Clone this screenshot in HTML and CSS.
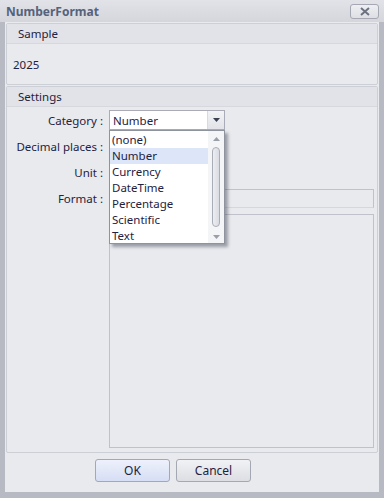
FILE: index.html
```html
<!DOCTYPE html>
<html lang="en">
<head>
    <meta charset="UTF-8">
    <title>NumberFormat</title>
    <link rel="stylesheet" href="styles.css">
</head>
<body>
<div class="window">
    <div class="titlebar">
        <span class="title">NumberFormat</span>
        <span class="close">
            <svg width="12" height="9" viewBox="0 0 12 9"><path d="M2 1 L10 8 M10 1 L2 8" stroke="#6d7280" stroke-width="2"/></svg>
        </span>
    </div>
    <div class="body">
        <div class="group sample">
            <div class="group-head">Sample</div>
            <div class="sample-value">2025</div>
        </div>
        <div class="group settings">
            <div class="group-head">Settings</div>
            <div class="form">
                <div class="field">
                    <label>Category :</label>
                    <div class="combo">
                        <span class="combo-text">Number</span>
                        <span class="combo-btn">
                            <svg width="7" height="4" viewBox="0 0 7 4"><path d="M0 0 H7 L3.5 4 Z" fill="#3c4150"/></svg>
                        </span>
                        <div class="dropdown">
                            <div class="items">
                                <div class="item">(none)</div>
                                <div class="item selected">Number</div>
                                <div class="item">Currency</div>
                                <div class="item">DateTime</div>
                                <div class="item">Percentage</div>
                                <div class="item">Scientific</div>
                                <div class="item">Text</div>
                            </div>
                            <div class="scroll">
                                <svg width="7" height="4" viewBox="0 0 7 4"><path d="M0 4 H7 L3.5 0 Z" fill="#9a9ea8"/></svg>
                                <div class="thumb"></div>
                                <svg width="7" height="4" viewBox="0 0 7 4"><path d="M0 0 H7 L3.5 4 Z" fill="#9a9ea8"/></svg>
                            </div>
                        </div>
                    </div>
                </div>
                <div class="field">
                    <label>Decimal places :</label>
                </div>
                <div class="field">
                    <label>Unit :</label>
                </div>
                <div class="field">
                    <label>Format :</label>
                    <div class="textbox"></div>
                </div>
                <div class="field top">
                    <label></label>
                    <div class="preview"></div>
                </div>
            </div>
        </div>
        <div class="buttons">
            <button class="btn primary">OK</button>
            <button class="btn">Cancel</button>
        </div>
    </div>
</div>
</body>
</html>
```

FILE: styles.css
```css
html, body {
    margin: 0;
    padding: 0;
}

body {
    font-family: "Noto Sans", "DejaVu Sans", sans-serif;
    font-size: 11.5px;
    color: #1f2240;
}

.window {
    width: 384px;
    height: 498px;
    box-sizing: border-box;
    background: #b7bac3;
    display: flex;
    flex-direction: column;
}

.titlebar {
    height: 22px;
    display: flex;
    align-items: center;
    justify-content: space-between;
    padding: 0 5px 0 6px;
    background: linear-gradient(#e2e3e8, #d4d6dc);
}

.title {
    font-weight: bold;
    color: #56627a;
    font-size: 12px;
}

.close {
    width: 27px;
    height: 13px;
    border: 1px solid #a5a8b2;
    border-radius: 3px;
    background: linear-gradient(#eeeff2, #dddfe4);
    display: flex;
    align-items: center;
    justify-content: center;
}

.body {
    flex: 1;
    margin: 0 5px 6px 5px;
    background: #e9eaee;
    display: flex;
    flex-direction: column;
    padding: 1px 1px 0 1px;
}

.group {
    border: 1px solid #cdcfd6;
    border-radius: 2px;
    margin-bottom: 1px;
}

.group-head {
    height: 19px;
    line-height: 19px;
    padding-left: 11px;
    background: #e2e3e8;
    border-bottom: 1px solid #d6d8de;
}

.sample {
    height: 62px;
    box-sizing: border-box;
}

.sample-value {
    padding: 13px 0 0 6px;
}

.settings {
    height: 367px;
    box-sizing: border-box;
}

.form {
    padding: 0 3px 0 0;
    display: flex;
    flex-direction: column;
}

.field {
    display: flex;
    align-items: center;
    min-height: 26px;
}

.field.top {
    align-items: flex-start;
}

.field label {
    width: 96px;
    padding-right: 6px;
    text-align: right;
    flex-shrink: 0;
}

.combo {
    position: relative;
    width: 114px;
    height: 18px;
    border: 1px solid #a9acb6;
    background: #fff;
    display: flex;
    align-items: center;
}

.combo-text {
    flex: 1;
    padding-left: 3px;
}

.combo-btn {
    width: 16px;
    height: 18px;
    display: flex;
    align-items: center;
    justify-content: center;
    background: linear-gradient(#f2f3f6, #e1e3e8);
    border-left: 1px solid #d8dae0;
}

.dropdown {
    position: absolute;
    left: -1px;
    top: 19px;
    width: 114px;
    height: 112px;
    border: 1px solid #8f939e;
    background: #fff;
    box-shadow: 3px 3px 3px rgba(60, 64, 80, 0.45);
    display: flex;
    z-index: 2;
}

.items {
    flex: 1;
    padding-top: 1px;
}

.item {
    height: 16px;
    line-height: 16px;
    padding-left: 2px;
}

.item.selected {
    background: #dde6f8;
}

.scroll {
    width: 16px;
    background: #f4f5f7;
    display: flex;
    flex-direction: column;
    align-items: center;
    justify-content: space-between;
    padding: 6px 0 4px;
    box-sizing: border-box;
}

.thumb {
    width: 6px;
    flex: 1;
    margin: 6px 0 8px;
    border: 1px solid #a9adb8;
    border-radius: 4px;
    background: linear-gradient(90deg, #eceef2, #d9dbe2);
}

.textbox {
    width: 264px;
    height: 17px;
    border: 1px solid #bfc2ca;
    border-bottom-color: #d5d7dd;
}

.preview {
    width: 264px;
    height: 232px;
    margin-top: 3px;
    border: 1px solid #bfc2ca;
}

.buttons {
    display: flex;
    gap: 6px;
    padding: 5px 0 0 89px;
}

.btn {
    width: 75px;
    height: 23px;
    font-family: inherit;
    font-size: 12px;
    color: #1f2240;
    border: 1px solid #a5a8b2;
    border-radius: 3px;
    background: linear-gradient(#f1f2f5, #dcdee3);
    padding: 0;
}

.btn.primary {
    background: linear-gradient(#eef1fb, #d6def5);
}
```
